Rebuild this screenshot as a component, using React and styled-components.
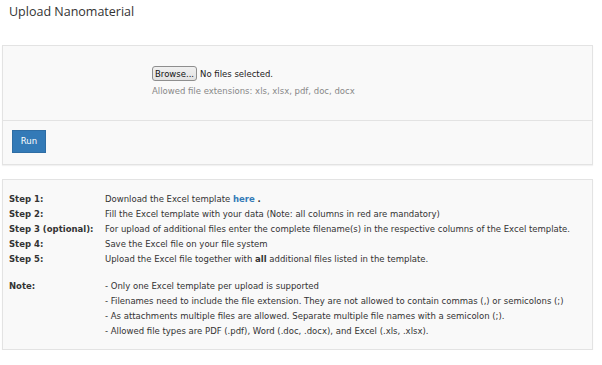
import React from "react";
import styled, { createGlobalStyle } from "styled-components";

const Global = createGlobalStyle`
  html, body { margin: 0; padding: 0; background: #fff; }
  body { font-family: "DejaVu Sans", Verdana, sans-serif; color: #333; }
`;

const Page = styled.div`
  padding: 3px 9px 0 2px;
  width: 602px;
  box-sizing: border-box;
`;

const Title = styled.h1`
  margin: 0 0 0 7px;
  font-family: "Open Sans", sans-serif;
  font-weight: 400;
  font-size: 12.5px;
  line-height: 18px;
  color: #333;
`;

const Panel = styled.div`
  margin-top: ${(p) => p.$top}px;
  border: 1px solid #e3e3e3;
  background: #f9f9f9;
  box-shadow: 0 1px 1px rgba(0, 0, 0, 0.05);
`;

const UploadArea = styled.div`
  height: 75px;
  box-sizing: border-box;
  padding: 20px 0 0 149px;
  border-bottom: 1px solid #e3e3e3;
`;

const FileRow = styled.div`
  display: flex;
  align-items: center;
  gap: 3px;
  font-size: 8.5px;
  color: #222;
`;

const BrowseButton = styled.button`
  font-family: "DejaVu Sans", sans-serif;
  font-size: 8.5px;
  height: 15px;
  padding: 0 2px;
  border: 1px solid #8e8e8e;
  border-radius: 3px;
  background: linear-gradient(#f0f0f0, #e2e2e2);
  color: #111;
`;

const Hint = styled.div`
  margin-top: 5px;
  font-size: 8.5px;
  color: #888;
`;

const Footer = styled.div`
  padding: 8px 9px 11px;
`;

const RunButton = styled.button`
  width: 34px;
  height: 23px;
  border: 1px solid #2e6da4;
  background: #337ab7;
  color: #fff;
  font-family: "DejaVu Sans", sans-serif;
  font-size: 8.5px;
  padding: 0;
`;

const Steps = styled.div`
  padding: 12px 6px 10px 6px;
  display: grid;
  grid-template-columns: 96px 1fr;
  font-size: 8.5px;
  line-height: 15px;
  color: #333;
`;

const Label = styled.div`
  font-weight: bold;
  margin-top: ${(p) => (p.$gap ? 12 : 0)}px;
`;

const Value = styled.div`
  margin-top: ${(p) => (p.$gap ? 12 : 0)}px;
`;

const Link = styled.a`
  color: #337ab7;
  font-weight: bold;
  text-decoration: none;
`;

export default function App() {
  return (
    <Page>
      <Global />
      <Title>Upload Nanomaterial</Title>
      <Panel $top={24}>
        <UploadArea>
          <FileRow>
            <BrowseButton>Browse...</BrowseButton>
            <span>No files selected.</span>
          </FileRow>
          <Hint>Allowed file extensions: xls, xlsx, pdf, doc, docx</Hint>
        </UploadArea>
        <Footer>
          <RunButton>Run</RunButton>
        </Footer>
      </Panel>
      <Panel $top={14}>
        <Steps>
          <Label>Step 1:</Label>
          <Value>
            Download the Excel template <Link href="#">here</Link> <b>.</b>
          </Value>
          <Label>Step 2:</Label>
          <Value>Fill the Excel template with your data (Note: all columns in red are mandatory)</Value>
          <Label>Step 3 (optional):</Label>
          <Value>
            For upload of additional files enter the complete filename(s) in the respective columns of the Excel template.
          </Value>
          <Label>Step 4:</Label>
          <Value>Save the Excel file on your file system</Value>
          <Label>Step 5:</Label>
          <Value>
            Upload the Excel file together with <b>all</b> additional files listed in the template.
          </Value>
          <Label $gap>Note:</Label>
          <Value $gap>- Only one Excel template per upload is supported</Value>
          <Label />
          <Value>
            - Filenames need to include the file extension. They are not allowed to contain commas (,) or semicolons (;)
          </Value>
          <Label />
          <Value>- As attachments multiple files are allowed. Separate multiple file names with a semicolon (;).</Value>
          <Label />
          <Value>- Allowed file types are PDF (.pdf), Word (.doc, .docx), and Excel (.xls, .xlsx).</Value>
        </Steps>
      </Panel>
    </Page>
  );
}
